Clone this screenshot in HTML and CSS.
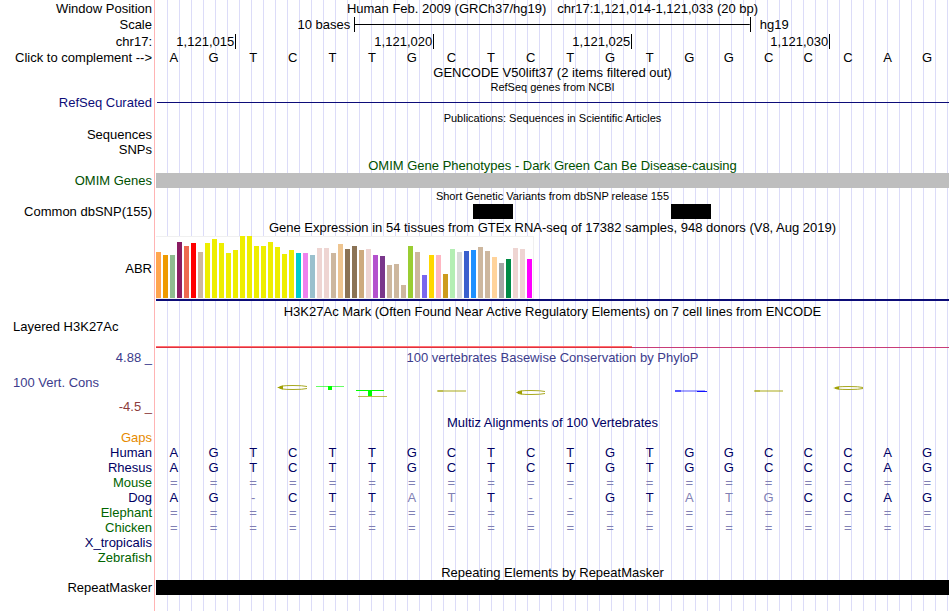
FILE: index.html
```
<!DOCTYPE html>
<html lang="en">

<head>
    <meta charset="UTF-8">
    <meta name="viewport" content="width=device-width, initial-scale=1.0">
    <title>Genome Browser - Human hg19</title>
    <link rel="stylesheet" href="styles.css">
</head>

<body>
    <main class="browser">
        <!-- Ruler -->
        <div class="row tall">
            <div class="label">Window Position</div>
            <div class="data title">Human Feb. 2009 (GRCh37/hg19) &nbsp; chr17:1,121,014-1,121,033 (20 bp)</div>
        </div>
        <div class="row ruler-row">
            <div class="label">Scale</div>
            <div class="data scale">
                <span class="scale-size">10 bases</span>
                <span class="scale-bar"></span>
                <span class="scale-db">hg19</span>
            </div>
        </div>
        <div class="row ruler-row">
            <div class="label">chr17:</div>
            <div class="data ticks">
                <span class="tick">1,121,015</span>
                <span class="tick">1,121,020</span>
                <span class="tick">1,121,025</span>
                <span class="tick">1,121,030</span>
            </div>
        </div>
        <div class="row">
            <div class="label">Click to complement --&gt;</div>
            <div class="data bases" data-seq="AGTCTTGCTCTGTGGCCCAG"></div>
        </div>

        <!-- Genes -->
        <div class="row">
            <div class="label"></div>
            <div class="data title">GENCODE V50lift37 (2 items filtered out)</div>
        </div>
        <div class="row">
            <div class="label"></div>
            <div class="data title small">RefSeq genes from NCBI</div>
        </div>
        <div class="row">
            <div class="label refseq">RefSeq Curated</div>
            <div class="data"><div class="intron"></div></div>
        </div>
        <div class="row tall">
            <div class="label"></div>
            <div class="data title small">Publications: Sequences in Scientific Articles</div>
        </div>
        <div class="row tall">
            <div class="label">Sequences</div>
            <div class="data"></div>
        </div>
        <div class="row">
            <div class="label">SNPs</div>
            <div class="data"></div>
        </div>
        <div class="row tall">
            <div class="label"></div>
            <div class="data title omim">OMIM Gene Phenotypes - Dark Green Can Be Disease-causing</div>
        </div>
        <div class="row">
            <div class="label omim">OMIM Genes</div>
            <div class="data"><div class="block gray"></div></div>
        </div>

        <!-- Variants -->
        <div class="row tall">
            <div class="label"></div>
            <div class="data title small">Short Genetic Variants from dbSNP release 155</div>
        </div>
        <div class="row">
            <div class="label">Common dbSNP(155)</div>
            <div class="data snps">
                <div class="block snp-a"></div>
                <div class="block snp-b"></div>
            </div>
        </div>

        <!-- Expression -->
        <div class="row ruler-row">
            <div class="label"></div>
            <div class="data title">Gene Expression in 54 tissues from GTEx RNA-seq of 17382 samples, 948 donors (V8, Aug 2019)</div>
        </div>
        <div class="row gtex-row">
            <div class="label">ABR</div>
            <div class="data gtex">
                <div class="chart" id="gtex"></div>
            </div>
        </div>

        <!-- Regulation -->
        <div class="row h3k-title">
            <div class="label"></div>
            <div class="data title">H3K27Ac Mark (Often Found Near Active Regulatory Elements) on 7 cell lines from ENCODE</div>
        </div>
        <div class="row h3k-row">
            <div class="label left">Layered H3K27Ac</div>
            <div class="data signal">
                <div class="signal-high"></div>
                <div class="signal-low"></div>
            </div>
        </div>

        <!-- Conservation -->
        <div class="row cons-edge">
            <div class="label cons">4.88 _</div>
            <div class="data title cons">100 vertebrates Basewise Conservation by PhyloP</div>
        </div>
        <div class="row cons-row">
            <div class="label left cons">100 Vert. Cons</div>
            <div class="data">
                <svg class="logo" viewBox="0 0 793 32" preserveAspectRatio="none" aria-hidden="true">
                    <g fill="none" stroke="#a8a820">
                        <path d="M151 20.500Q147 19.500 137 19.500Q123 19.500 123 21.500Q123 23.500 137 23.500Q147 23.500 151 22.500" />
                        <path d="M389 25.500Q385 24.500 375 24.500Q361 24.500 361 26.500Q361 28.500 375 28.500Q385 28.500 389 27.500" />
                        <path d="M707 21.500Q703 20.500 693 20.500Q679 20.500 679 22Q679 23.500 693 23.500Q703 23.500 707 22.500" />
                    </g>
                    <g fill="#a0a000">
                        <path d="M121 21.500L127 19.500V23.500Z" />
                        <path d="M360 26.500L366 24.500V28.500Z" />
                        <path d="M677 22L683 20.500V23.500Z" />
                        <rect x="202" y="30" width="29" height="1" opacity=".7" />
                        <rect x="281" y="24" width="29" height="2" opacity=".45" />
                        <rect x="598" y="24" width="29" height="2" opacity=".45" />
                        <rect x="282" y="24" width="5" height="2" opacity=".4" />
                        <rect x="599" y="24" width="5" height="2" opacity=".4" />
                    </g>
                    <g fill="#00ff00">
                        <rect x="160" y="20" width="28" height="1" opacity=".6" />
                        <rect x="172" y="20" width="4" height="4" />
                        <rect x="200" y="24" width="28" height="1" />
                        <rect x="212" y="24" width="4" height="6" />
                    </g>
                    <g fill="#0000ff">
                        <rect x="519" y="24" width="30" height="2" opacity=".35" />
                        <rect x="519" y="24" width="6" height="2" opacity=".5" />
                        <rect x="541" y="25" width="10" height="1" opacity=".9" />
                    </g>
                </svg>
            </div>
        </div>
        <div class="row ruler-row">
            <div class="label cons-min">-4.5 _</div>
            <div class="data"></div>
        </div>

        <!-- Alignments -->
        <div class="row">
            <div class="label"></div>
            <div class="data title multiz">Multiz Alignments of 100 Vertebrates</div>
        </div>
        <div class="row">
            <div class="label gaps">Gaps</div>
            <div class="data"></div>
        </div>
        <div class="row">
            <div class="label multiz">Human</div>
            <div class="data bases multiz" data-seq="AGTCTTGCTCTGTGGCCCAG"></div>
        </div>
        <div class="row">
            <div class="label multiz">Rhesus</div>
            <div class="data bases multiz" data-seq="AGTCTTGCTCTGTGGCCCAG"></div>
        </div>
        <div class="row">
            <div class="label species">Mouse</div>
            <div class="data bases multiz" data-seq="===================="></div>
        </div>
        <div class="row">
            <div class="label multiz">Dog</div>
            <!-- lower case = differs from human -->
            <div class="data bases multiz" data-seq="AG-CTTatT--GTatgCCAG"></div>
        </div>
        <div class="row">
            <div class="label species">Elephant</div>
            <div class="data bases multiz" data-seq="===================="></div>
        </div>
        <div class="row">
            <div class="label species">Chicken</div>
            <div class="data bases multiz" data-seq="===================="></div>
        </div>
        <div class="row">
            <div class="label multiz">X_tropicalis</div>
            <div class="data"></div>
        </div>
        <div class="row">
            <div class="label species">Zebrafish</div>
            <div class="data"></div>
        </div>

        <!-- Repeats -->
        <div class="row">
            <div class="label"></div>
            <div class="data title">Repeating Elements by RepeatMasker</div>
        </div>
        <div class="row">
            <div class="label">RepeatMasker</div>
            <div class="data"><div class="block"></div></div>
        </div>
    </main>

    <script>
        // One entry per tissue: [height, color]
        const tissues = [
            [46, '#ffa54f'], [43, '#ee9a00'], [43, '#8fbc8f'], [56, '#8b1c62'], [52, '#ee6a50'], [55, '#ff0000'],
            [46, '#cdb79e'], [55, '#eeee00'], [59, '#eeee00'], [55, '#eeee00'], [45, '#eeee00'], [48, '#eeee00'],
            [62, '#eeee00'], [62, '#eeee00'], [52, '#eeee00'], [52, '#eeee00'], [56, '#eeee00'], [51, '#eeee00'],
            [44, '#eeee00'], [48, '#eeee00'], [45, '#00cdcd'], [45, '#ee82ee'], [43, '#9ac0cd'], [50, '#eed5d2'],
            [50, '#eed5d2'], [45, '#cdb79e'], [54, '#eec591'], [49, '#8b7355'], [52, '#8b7355'], [48, '#cdaa7d'],
            [49, '#eed5d2'], [43, '#b452cd'], [42, '#7a378b'], [33, '#cdb79e'], [34, '#cdb79e'], [13, '#cdb79e'],
            [52, '#9acd32'], [46, '#cdb79e'], [23, '#7a67ee'], [43, '#ffd700'], [43, '#ffb6c1'], [24, '#cd9b1d'],
            [49, '#b4eeb4'], [46, '#d9d9d9'], [47, '#3a5fcd'], [48, '#1e90ff'], [51, '#cdb79e'], [47, '#cdb79e'],
            [41, '#ffd39b'], [35, '#a6a6a6'], [39, '#008b45'], [50, '#eed5d2'], [49, '#eed5d2'], [39, '#ff00ff']
        ];

        const chart = document.getElementById('gtex');
        tissues.forEach(([height, color]) => {
            const bar = document.createElement('div');
            bar.className = 'bar';
            bar.style.height = height + 'px';
            bar.style.backgroundColor = color;
            chart.appendChild(bar);
        });

        document.querySelectorAll('.bases').forEach(row => {
            for (const base of row.dataset.seq) {
                const cell = document.createElement('span');
                cell.innerText = base.toUpperCase();
                if (base !== base.toUpperCase() || base === '=' || base === '-') {
                    cell.className = 'faded';
                }
                row.appendChild(cell);
            }
        });
    </script>
</body>

</html>
```
FILE: styles.css
```
body {
    margin: 0;
    font-family: "Liberation Sans", Arial, Helvetica, sans-serif;
    font-size: 13px;
    line-height: 15px;
    color: #000;
    background-color: #fff;
}

/* Red edge beside the labels, then a guide line every 12px */
.browser {
    box-sizing: border-box;
    min-height: 100vh;
    padding-right: 1px;
    background-image:
        linear-gradient(to right, #fff 154px, #ffb4b4 154px, #ffb4b4 155px, #fff 155px, #fff 156px, transparent 156px),
        repeating-linear-gradient(to right, #dcdcf8 0, #dcdcf8 1px, transparent 1px, transparent 12px);
    background-position: 0 0, 11px 0;
}

.row {
    display: flex;
    align-items: center;
    min-height: 15px;
}

.row.tall {
    min-height: 16px;
}

.row.ruler-row {
    min-height: 17px;
}

.label {
    box-sizing: border-box;
    flex: 0 0 156px;
    padding-right: 4px;
    text-align: right;
    white-space: nowrap;
}

.label.left {
    padding-left: 13px;
    text-align: left;
}

.data {
    flex: 1;
    min-width: 0;
}

.title {
    text-align: center;
    white-space: nowrap;
}

.small {
    font-size: 11px;
}

/* Track colors */
.refseq {
    color: #0c0c78;
}

.omim {
    color: #005000;
}

.cons {
    color: #3c3c8c;
}

.cons-min {
    color: #8c3c3c;
}

.multiz {
    color: #000064;
}

.gaps {
    color: #e68a00;
}

.species {
    color: #006400;
}

/* Scale and position ruler */
.scale {
    display: flex;
    align-items: center;
}

.scale-size {
    box-sizing: border-box;
    width: 25%;
    padding-right: 4px;
    text-align: right;
}

.scale-bar {
    box-sizing: border-box;
    width: 50%;
    height: 15px;
    border: solid #000;
    border-width: 0 1px;
    background: linear-gradient(#000, #000) center / 100% 1px no-repeat;
}

.scale-db {
    padding-left: 9px;
}

.ticks {
    display: flex;
    padding-left: 1px;
}

.tick {
    box-sizing: border-box;
    width: 25%;
    padding-right: 1px;
    border-right: 1px solid #000;
    text-align: right;
}

.tick:first-child {
    width: 10%;
}

/* One column per base */
.bases,
.snps {
    display: grid;
    grid-template-columns: repeat(20, 1fr);
}

.bases {
    margin: 0 2px 0 -2px;
    text-align: center;
}

.faded {
    color: #8080b4;
}

/* Items */
.intron {
    height: 1px;
    margin-left: 1px;
    background-color: #0c0c78;
}

.block {
    height: 15px;
    background-color: #000;
}

.block.gray {
    background-color: #bebebe;
}

.snp-a {
    grid-column: 9;
}

.snp-b {
    grid-column: 14;
}

/* GTEx bar chart */
.gtex {
    border-bottom: 2px solid #0c0c78;
}

.chart {
    box-sizing: border-box;
    display: flex;
    align-items: flex-end;
    gap: 2px;
    width: max-content;
    height: 63px;
    padding-right: 1px;
    border: solid #f0f0f0;
    border-width: 1px 1px 1px 0;
    background-color: #fff;
}

.bar {
    width: 5px;
}

/* H3K27Ac signal */
.h3k-title {
    padding-top: 3px;
}

.h3k-row {
    align-items: stretch;
    height: 29px;
}

.signal {
    display: flex;
    align-items: flex-end;
}

.signal-high {
    box-sizing: border-box;
    width: 60%;
    height: 2px;
    border-top: 1px solid #ff7070;
    background-color: #e03040;
}

.signal-low {
    width: 40%;
    height: 1px;
    background-color: #c83c78;
}

/* Conservation */
.cons-edge {
    min-height: 18px;
}

.cons-row {
    height: 32px;
}

.logo {
    display: block;
    width: 100%;
    height: 32px;
}
```
